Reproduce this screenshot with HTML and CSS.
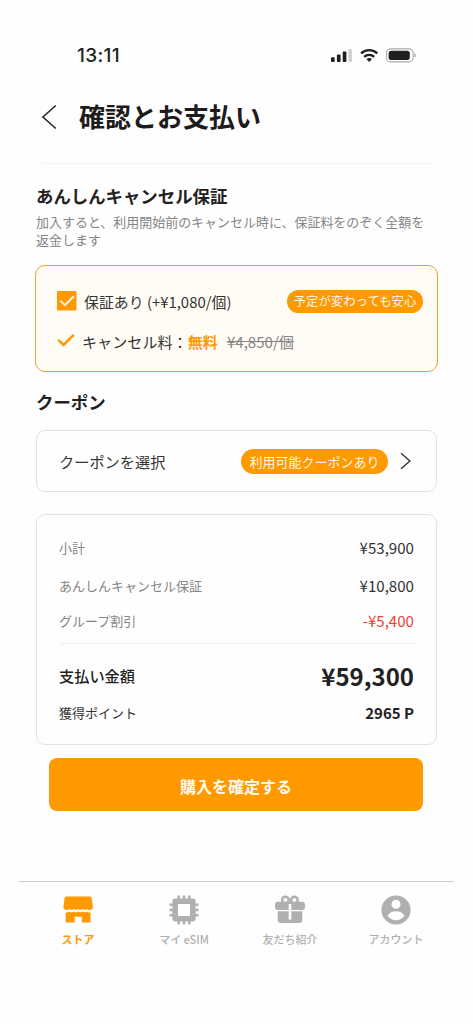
FILE: index.html
```
<!DOCTYPE html>
<html lang="ja">
<head>
<meta charset="utf-8">
<title>確認とお支払い</title>
<link rel="stylesheet" href="styles.css">
</head>
<body>
<div class="screen">
  <div class="status">
    <span class="time">13:11</span>
    <svg class="status-icons" width="86" height="16" viewBox="0 0 86 16">
      <g fill="#231f20"><rect x="0" y="9.300" width="3.700" height="4.700" rx="1"/><rect x="5.900" y="6.600" width="3.700" height="7.400" rx="1"/><rect x="11.700" y="3.600" width="3.700" height="10.400" rx="1"/></g>
      <rect x="17.400" y="1" width="3.500" height="13" rx="1" fill="#d2d0d1"/>
      <g fill="none" stroke="#231f20" stroke-width="2.300"><path d="M30.100 5.400a11.600 11.600 0 0 1 16.200 0"/><path d="M33.200 8.900a7.200 7.200 0 0 1 10 0"/></g>
      <path d="M38.200 13.900l-2.800-2.800a4.300 4.300 0 0 1 5.600 0z" fill="#231f20"/>
      <rect x="55.500" y=".9" width="26.600" height="13" rx="4.200" fill="#fff" stroke="#aaa7a8" stroke-width="1.100"/>
      <rect x="57.600" y="2.800" width="21.200" height="9.300" rx="2.800" fill="#231f20"/>
      <path d="M83.400 5.200c2 .6 2 3.800 0 4.400z" fill="#aaa7a8"/>
    </svg>
  </div>
  <header class="header">
    <svg width="16" height="26" viewBox="0 0 16 26"><path d="M14.800 1.500 1.900 13 14.800 24.500" fill="none" stroke="#222" stroke-width="1.500"/></svg>
    <h1 class="title">確認とお支払い</h1>
  </header>
  <main class="content">
    <div class="prev-card"></div>
    <h2 class="heading">あんしんキャンセル保証</h2>
    <p class="note">加入すると、利用開始前のキャンセル時に、保証料をのぞく全額を<br>返金します</p>
    <section class="guarantee">
      <div class="option">
        <svg width="20" height="20" viewBox="0 0 20 20"><rect width="19.500" height="19.500" rx="1" fill="#ff9900"/><path d="m3.300 9.600 4.600 4.600 9-9" fill="none" stroke="#fff8e8" stroke-width="2"/></svg>
        <span class="option-label">保証あり (+¥1,080/個)</span>
        <span class="pill pill-safe">予定が変わっても安心</span>
      </div>
      <div class="fee">
        <svg width="18" height="14" viewBox="0 0 18 14"><path d="M1.300 5.800 6.600 11 16.700 .9" fill="none" stroke="#ff9900" stroke-width="2.500"/></svg>
        <span class="fee-label">キャンセル料：</span><b class="free">無料</b><s class="old">¥4,850/個</s>
      </div>
    </section>
    <h2 class="heading coupon-heading">クーポン</h2>
    <section class="coupon">
      <span class="coupon-label">クーポンを選択</span>
      <span class="pill pill-coupon">利用可能クーポンあり</span>
      <svg width="12" height="18" viewBox="0 0 12 18"><path d="m1 1.200 8.900 7.800L1 16.800" fill="none" stroke="#333" stroke-width="1.400"/></svg>
    </section>
    <section class="summary">
      <div class="row"><span>小計</span><span class="amount">¥53,900</span></div>
      <div class="row row-guarantee"><span>あんしんキャンセル保証</span><span class="amount">¥10,800</span></div>
      <div class="row row-discount"><span>グループ割引</span><span class="amount discount">-¥5,400</span></div>
      <div class="total"><span class="total-label">支払い金額</span><span class="total-amount">¥59,300</span></div>
      <div class="points"><span>獲得ポイント</span><b class="point-value">2965 P</b></div>
    </section>
    <button class="confirm" type="button">購入を確定する</button>
  </main>
  <nav class="tabs">
    <a class="tab active">
      <svg width="32" height="32" viewBox="0 0 32 32" fill="currentColor"><path d="M4 2.500h24q1.200 0 1.500 1.200l1.500 9.200q.2 2.200-2.200 2.900-2 .9-4-.9-2 1.900-4.400 0-2.200 1.900-4.400 0-2.200 1.900-4.400 0-2 1.900-4.400 0-2 1.800-4 .9-2-.7-1.800-2.900L2.600 3.700Q2.900 2.500 4 2.500z"/><path d="M3.700 18.200q2.300.6 3.500-.8 2.200 1.900 4.400 0 2.200 1.900 4.400 0 2.200 1.900 4.400 0 2.200 1.900 4.400 0 1.200 1.400 3.700.8V28.500h-8.600v-5.700h-7.300v5.700H3.700z"/></svg>
      <span>ストア</span>
    </a>
    <a class="tab">
      <svg width="32" height="32" viewBox="0 0 32 32"><path d="M10.700 1.500v29M16 1.500v29M21.300 1.500v29M1.500 10.700h29M1.500 16h29M1.500 21.300h29" stroke="currentColor" stroke-width="2.600"/><rect x="4.400" y="4.400" width="23.200" height="23.200" rx="3" fill="currentColor"/><path d="M10 10h12v12H10z" fill="#fff"/></svg>
      <span>マイ eSIM</span>
    </a>
    <a class="tab">
      <svg width="32" height="32" viewBox="0 0 32 32"><g fill="none" stroke="currentColor" stroke-width="2.600"><circle cx="11.400" cy="6" r="3.300"/><circle cx="20.400" cy="6" r="3.300"/></g><path d="M4 7.700h24q3 0 3 3v2.300q0 3-3 3H4q-3 0-3-3v-2.300q0-3 3-3zM3.700 17.200h24.600V26q0 3-3 3H6.700q-3 0-3-3z" fill="currentColor"/><path d="M14.700 10h2.600v15.500h-2.600z" fill="#fff"/></svg>
      <span>友だち紹介</span>
    </a>
    <a class="tab">
      <svg width="32" height="32" viewBox="0 0 32 32"><circle cx="16" cy="16" r="14.600" fill="currentColor"/><circle cx="16" cy="10.300" r="4.500" fill="#fff"/><path d="M7.500 21.400c3.600-5.700 13.400-5.700 17 0-3.600 6.300-13.400 6.300-17 0z" fill="#fff"/></svg>
      <span>アカウント</span>
    </a>
  </nav>
</div>
</body>
</html>
```
FILE: styles.css
```
* { box-sizing: border-box; }
body { margin: 0; background: #fff; color: #222; font-family: "Noto Sans CJK JP", sans-serif; }
svg { display: block; flex: none; }
.screen { width: 473px; height: 1024px; padding-top: 43px; display: flex; flex-direction: column; background: #fefefe; overflow: hidden; }
.status { height: 24px; padding: 1px 56px 0 77px; display: flex; justify-content: space-between; align-items: center; }
.time { font: 500 19px/24px Inter, sans-serif; letter-spacing: 0.3px; color: #231f20; }
.header { height: 90px; padding: 15px 0 0 41px; display: flex; align-items: flex-start; }
.header svg { margin-top: 22px; }
.title { margin: 15px 0 0 22px; font-size: 26px; line-height: 38px; font-weight: 700; color: #1d1b1c; }
.content { padding: 0 36px; }
.prev-card { height: 7px; border-bottom: 1px solid #f4f4f4; border-radius: 0 0 8px 8px; }
.heading { margin: 19px 0 0; font-size: 17.400px; line-height: 26px; font-weight: 700; color: #222; }
.note { margin: 4px 0 0; font-size: 12.980px; line-height: 18px; color: #858585; white-space: nowrap; }
.guarantee { margin: 16px -1px 0; height: 107px; border: 1px solid #f0a030; border-radius: 10px; background: #fffcf5; padding: 23px 14px 0 21px; }
.option { height: 24px; display: flex; align-items: center; }
.option-label { margin: 2px 0 0 7px; font-size: 14.900px; line-height: 22px; color: #333; }
.pill { background: #ff9900; color: #fff7e5; border-radius: 14px; text-align: center; white-space: nowrap; }
.pill-safe { margin-left: auto; width: 136px; height: 23px; font-size: 12.400px; line-height: 22px; }
.fee { margin-top: 16px; height: 24px; display: flex; align-items: center; font-size: 15.100px; line-height: 24px; color: #333; }
.fee-label { margin-left: 7px; }
.free { color: #ff9900; }
.old { margin-left: 9px; color: #858585; }
.coupon-heading { margin-top: 17px; }
.coupon { margin-top: 15px; height: 62px; border: 1px solid #e3e3e3; border-radius: 9px; padding: 0 24px 0 22px; display: flex; align-items: center; }
.coupon-label { font-size: 15.200px; color: #333; margin-right: auto; }
.pill-coupon { width: 147px; height: 25px; font-size: 13px; line-height: 25px; margin-right: 12px; }
.summary { margin-top: 22px; height: 231px; border: 1px solid #e3e3e3; border-radius: 9px; padding: 20px 22px 0; }
.row { height: 24px; display: flex; justify-content: space-between; align-items: center; font-size: 13px; color: #858585; }
.row-guarantee { margin-top: 14px; }
.row-discount { margin-top: 11px; }
.amount { font-size: 15.100px; color: #333; }
.discount { color: #f0403a; }
.total { margin-top: 11px; border-top: 1px solid #f0f0f0; height: 53px; padding-top: 10px; display: flex; justify-content: space-between; align-items: center; }
.total-label { font-size: 15.200px; font-weight: 500; }
.total-amount { font-size: 24px; font-weight: 700; }
.points { margin-top: 4px; height: 24px; display: flex; justify-content: space-between; align-items: center; font-size: 13px; color: #333; }
.point-value { font-size: 15px; color: #222; }
.confirm { display: block; margin: 13px 13px 0; width: 374px; height: 53px; border: 0; border-radius: 8px; background: #ff9900; color: #fffaf0; font: 700 16px/24px "Noto Sans CJK JP", sans-serif; padding: 3px 0 0; }
.tabs { margin: 70px 19px 0; border-top: 1px solid #cbcbcb; padding: 12px 6px 0; display: grid; grid-template-columns: repeat(4, 106px); }
.tab { color: #b0b0b0; display: flex; flex-direction: column; align-items: center; font-size: 11px; line-height: 16px; font-weight: 500; gap: 5px; }
.active { color: #ff9900; font-weight: 700; }
```
